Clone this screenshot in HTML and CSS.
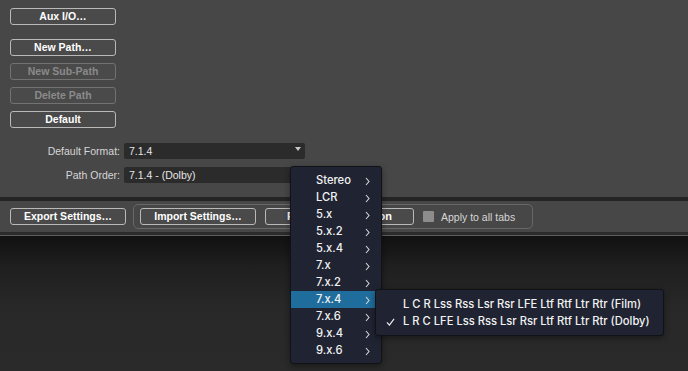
FILE: index.html
```html
<!DOCTYPE html>
<html lang="en">
<head>
    <meta charset="UTF-8">
    <meta name="viewport" content="width=device-width, initial-scale=1.0">
    <title>I/O Setup</title>
    <link rel="stylesheet" href="styles.css">
</head>
<body>
    <div class="panel">
        <div class="btn-col">
            <button class="btn aux">Aux I/O…</button>
            <button class="btn">New Path…</button>
            <button class="btn" disabled>New Sub-Path</button>
            <button class="btn" disabled>Delete Path</button>
            <button class="btn">Default</button>
        </div>
        <div class="fields">
            <div class="field">
                <span class="label">Default Format:</span>
                <div class="select">7.1.4<span class="caret"></span></div>
            </div>
            <div class="field">
                <span class="label">Path Order:</span>
                <div class="select">7.1.4 - (Dolby)</div>
            </div>
        </div>
    </div>
    <div class="divider"></div>
    <div class="toolbar">
        <button class="btn wide">Export Settings…</button>
        <div class="group">
            <button class="btn wide">Import Settings…</button>
            <button class="btn reset">Reset Configuration</button>
            <label class="check"><span class="box"></span>Apply to all tabs</label>
        </div>
    </div>
    <div class="strip"></div>
    <div class="bottom"></div>

    <ul class="menu">
        <li>Stereo<svg class="chev" viewBox="0 0 5 9"><polyline points="1,1 4,4.5 1,8"/></svg></li>
        <li>LCR<svg class="chev" viewBox="0 0 5 9"><polyline points="1,1 4,4.5 1,8"/></svg></li>
        <li>5.x<svg class="chev" viewBox="0 0 5 9"><polyline points="1,1 4,4.5 1,8"/></svg></li>
        <li>5.x.2<svg class="chev" viewBox="0 0 5 9"><polyline points="1,1 4,4.5 1,8"/></svg></li>
        <li>5.x.4<svg class="chev" viewBox="0 0 5 9"><polyline points="1,1 4,4.5 1,8"/></svg></li>
        <li>7.x<svg class="chev" viewBox="0 0 5 9"><polyline points="1,1 4,4.5 1,8"/></svg></li>
        <li>7.x.2<svg class="chev" viewBox="0 0 5 9"><polyline points="1,1 4,4.5 1,8"/></svg></li>
        <li class="active">7.x.4<svg class="chev" viewBox="0 0 5 9"><polyline points="1,1 4,4.5 1,8"/></svg></li>
        <li>7.x.6<svg class="chev" viewBox="0 0 5 9"><polyline points="1,1 4,4.5 1,8"/></svg></li>
        <li>9.x.4<svg class="chev" viewBox="0 0 5 9"><polyline points="1,1 4,4.5 1,8"/></svg></li>
        <li>9.x.6<svg class="chev" viewBox="0 0 5 9"><polyline points="1,1 4,4.5 1,8"/></svg></li>
    </ul>

    <ul class="submenu">
        <li><span class="tick"></span>L C R Lss Rss Lsr Rsr LFE Ltf Rtf Ltr Rtr (Film)</li>
        <li><span class="tick"><svg viewBox="0 0 10 9"><polyline points="1,5 3.8,8 9,1"/></svg></span>L R C LFE Lss Rss Lsr Rsr Ltf Rtf Ltr Rtr (Dolby)</li>
    </ul>
</body>
</html>
```
FILE: styles.css
```css
body {
    margin: 0;
    width: 688px;
    height: 371px;
    overflow: hidden;
    font-family: "Liberation Sans", Arial, sans-serif;
    background-color: #2a2a2a;
    position: relative;
}
.panel {
    height: 197px;
    box-sizing: border-box;
    padding: 8px 0 0 10px;
    background-color: #474747;
}
.btn-col {
    display: flex;
    flex-direction: column;
    gap: 7px;
    width: 106px;
}
.btn {
    height: 17px;
    box-sizing: border-box;
    padding: 0;
    border: 1px solid #b9b9b9;
    border-radius: 3px;
    background-color: #4a4a4a;
    color: #fff;
    font-family: "Liberation Sans", Arial, sans-serif;
    font-size: 10.5px;
    font-weight: bold;
    line-height: 15px;
    text-align: center;
}
.btn.aux {
    margin-bottom: 7px;
}
.btn:disabled {
    border-color: #727272;
    color: #8a8a8a;
}
.fields {
    margin-top: 15px;
    display: flex;
    flex-direction: column;
    gap: 8px;
}
.field {
    display: flex;
    align-items: center;
    gap: 4px;
}
.label {
    width: 110px;
    text-align: right;
    color: #d6d6d6;
    font-size: 10.5px;
}
.select {
    position: relative;
    width: 181px;
    height: 16px;
    box-sizing: border-box;
    padding-left: 5px;
    background-color: #2b2b2b;
    border-radius: 2px;
    color: #e6e6e6;
    font-size: 10.5px;
    line-height: 16px;
}
.caret {
    position: absolute;
    right: 4px;
    top: 4px;
    border-left: 3.5px solid transparent;
    border-right: 3.5px solid transparent;
    border-top: 4px solid #c8c8c8;
}
.divider {
    height: 4px;
    background-color: #242424;
}
.toolbar {
    height: 31px;
    box-sizing: border-box;
    padding: 0 0 0 10px;
    display: flex;
    align-items: center;
    gap: 7px;
    background-color: #474747;
}
.btn.wide {
    width: 116px;
}
.btn.reset {
    width: 149px;
    font-size: 11px;
}
.group {
    height: 25px;
    box-sizing: border-box;
    padding: 0 6px;
    display: flex;
    align-items: center;
    gap: 9px;
    border: 1px solid #686868;
    border-radius: 5px;
}
.check {
    display: flex;
    align-items: center;
    gap: 7px;
    padding-right: 11px;
    color: #d6d6d6;
    font-size: 10.5px;
}
.box {
    width: 11px;
    height: 11px;
    background-color: #8c8c8c;
    border-radius: 1px;
}
.strip {
    height: 3px;
    background-color: #2b2b2b;
    border-bottom: 1px solid #5c5c5c;
}
.bottom {
    height: 135px;
    background: linear-gradient(#111111, #1f1f1f 30px, #282828 70px, #2a2a2a);
}
.menu, .submenu {
    position: absolute;
    margin: 0;
    list-style: none;
    background-color: #202432;
    border: 1px solid #101217;
    box-shadow: 0 2px 6px rgba(0, 0, 0, 0.4);
    font-family: Inter, "Liberation Sans", sans-serif;
    font-weight: 500;
    font-size: 11.2px;
    color: #f2f2f2;
}
.menu {
    left: 290px;
    top: 166px;
    width: 90px;
    padding: 5px 0 4px;
    border-radius: 3px;
}
.menu li {
    height: 17px;
    line-height: 17px;
    padding-left: 25px;
    position: relative;
}
.menu li.active {
    background-color: #1f6d9d;
}
.chev {
    position: absolute;
    left: 74px;
    top: 4.5px;
    width: 5px;
    height: 9px;
    fill: none;
    stroke: #d8d8d8;
    stroke-width: 1.1;
}
.submenu {
    left: 375px;
    top: 289px;
    width: 287px;
    padding: 6px 0 5px;
    border-radius: 3px;
}
.submenu li {
    height: 17px;
    line-height: 17px;
    display: flex;
    align-items: center;
}
.tick {
    width: 25px;
    display: flex;
    justify-content: center;
    padding-left: 2px;
}
.tick svg {
    width: 9px;
    height: 8px;
    fill: none;
    stroke: #f2f2f2;
    stroke-width: 1.3;
}
```
